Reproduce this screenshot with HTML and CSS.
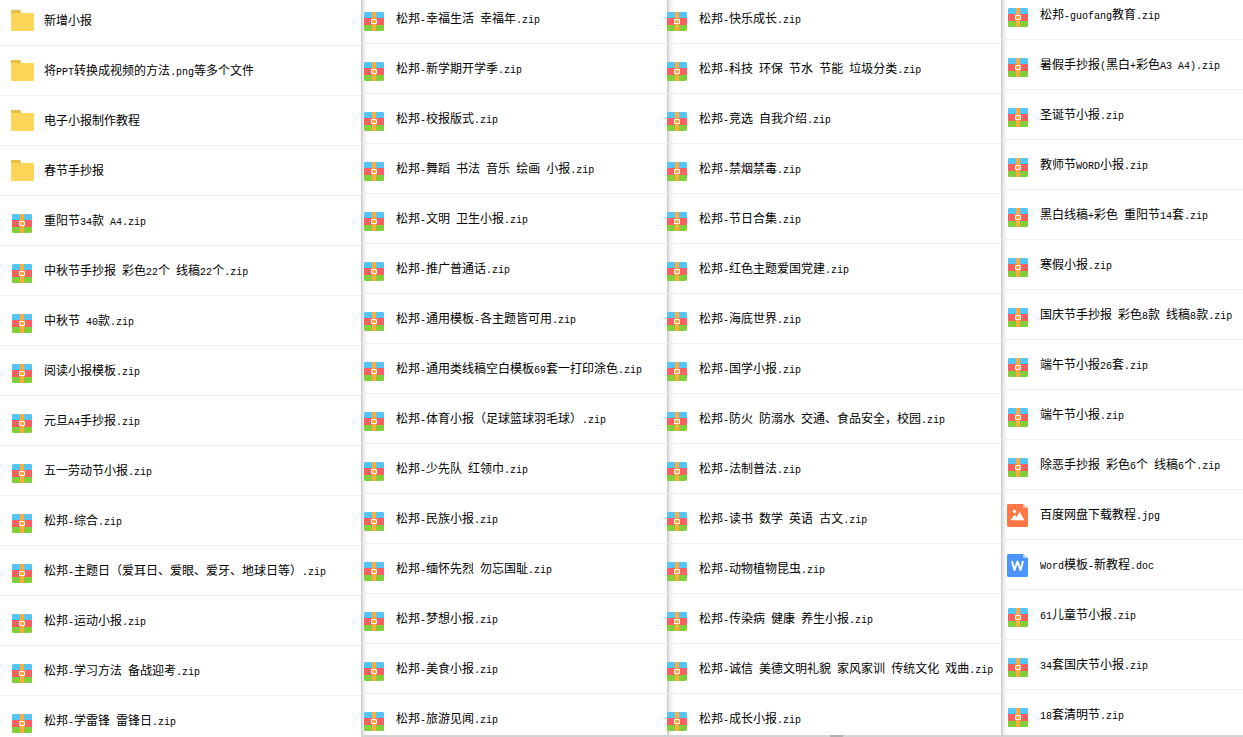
FILE: index.html
```html
<!DOCTYPE html>
<html lang="zh-CN">
<head>
<meta charset="utf-8">
<meta name="viewport" content="width=device-width, initial-scale=1">
<title>小报文件列表</title>
<link rel="stylesheet" href="styles.css">
</head>
<body>
<svg class="symbols" aria-hidden="true">
  <symbol id="folder" viewBox="0 0 24 24">
    <path d="M1 0h9l1 1v3H1z" fill="#edbd43"/>
    <path d="M10 0l1 1v1h-1z" fill="#f6dc9a"/>
    <path d="M1 3h23v18H1z" fill="#ffd659"/>
  </symbol>
  <symbol id="zip" viewBox="0 0 24 24">
    <path d="M3 4h18l1 1v5H2V5z" fill="#53c5f7"/>
    <path d="M2 10h20v7H2z" fill="#fb6060"/>
    <path d="M2 17h20v5l-1 1H3l-1-1z" fill="#80cf38"/>
    <path d="M10 4h4v19h-4z" fill="#ffac3d"/>
    <path d="M9.5 11.500h5v4h-5z" fill="#ffac3d" stroke="#fff"/>
  </symbol>
  <symbol id="image" viewBox="0 0 24 24">
    <path d="M2 0h15l5 4v18l-1 1H2l-1-1V1z" fill="#ff7744"/>
    <path d="M17 0l5 4h-4l-1-1z" fill="#ffc9b4"/>
    <circle cx="8.500" cy="7.500" r="1.700" fill="#fff"/>
    <path d="M5 16l3.500-5 2.500 2.500L13.500 8 18 16z" fill="#fff" stroke="#fff" stroke-width=".5" stroke-linejoin="round"/>
  </symbol>
  <symbol id="word" viewBox="0 0 24 24">
    <path d="M2 0h15l5 4v18l-1 1H2l-1-1V1z" fill="#4c94ff"/>
    <path d="M17 0l5 4h-4l-1-1z" fill="#b9d6ff"/>
    <path d="M6 7l2.500 9L11.500 7.500 14.500 16 17 7" fill="none" stroke="#fff" stroke-width="2" stroke-linejoin="round"/>
  </symbol>
</svg>
<main class="board">
  <ul class="files files-first">
    <li><svg><use href="#folder"/></svg><p>新增小报</p></li>
    <li><svg><use href="#folder"/></svg><p>将<span>PPT</span>转换成视频的方法<span>.png</span>等多个文件</p></li>
    <li><svg><use href="#folder"/></svg><p>电子小报制作教程</p></li>
    <li><svg><use href="#folder"/></svg><p>春节手抄报</p></li>
    <li><svg><use href="#zip"/></svg><p>重阳节<span>34</span>款<span> A4.zip</span></p></li>
    <li><svg><use href="#zip"/></svg><p>中秋节手抄报<span> </span>彩色<span>22</span>个<span> </span>线稿<span>22</span>个<span>.zip</span></p></li>
    <li><svg><use href="#zip"/></svg><p>中秋节<span> 40</span>款<span>.zip</span></p></li>
    <li><svg><use href="#zip"/></svg><p>阅读小报模板<span>.zip</span></p></li>
    <li><svg><use href="#zip"/></svg><p>元旦<span>A4</span>手抄报<span>.zip</span></p></li>
    <li><svg><use href="#zip"/></svg><p>五一劳动节小报<span>.zip</span></p></li>
    <li><svg><use href="#zip"/></svg><p>松邦<span>-</span>综合<span>.zip</span></p></li>
    <li><svg><use href="#zip"/></svg><p>松邦<span>-</span>主题日（爱耳日、爱眼、爱牙、地球日等）<span>.zip</span></p></li>
    <li><svg><use href="#zip"/></svg><p>松邦<span>-</span>运动小报<span>.zip</span></p></li>
    <li><svg><use href="#zip"/></svg><p>松邦<span>-</span>学习方法<span> </span>备战迎考<span>.zip</span></p></li>
    <li><svg><use href="#zip"/></svg><p>松邦<span>-</span>学雷锋<span> </span>雷锋日<span>.zip</span></p></li>
  </ul>
  <ul class="files files-second layered">
    <li><svg><use href="#zip"/></svg><p>松邦<span>-</span>幸福生活<span> </span>幸福年<span>.zip</span></p></li>
    <li><svg><use href="#zip"/></svg><p>松邦<span>-</span>新学期开学季<span>.zip</span></p></li>
    <li><svg><use href="#zip"/></svg><p>松邦<span>-</span>校报版式<span>.zip</span></p></li>
    <li><svg><use href="#zip"/></svg><p>松邦<span>-</span>舞蹈<span> </span>书法<span> </span>音乐<span> </span>绘画<span> </span>小报<span>.zip</span></p></li>
    <li><svg><use href="#zip"/></svg><p>松邦<span>-</span>文明<span> </span>卫生小报<span>.zip</span></p></li>
    <li><svg><use href="#zip"/></svg><p>松邦<span>-</span>推广普通话<span>.zip</span></p></li>
    <li><svg><use href="#zip"/></svg><p>松邦<span>-</span>通用模板<span>-</span>各主题皆可用<span>.zip</span></p></li>
    <li><svg><use href="#zip"/></svg><p>松邦<span>-</span>通用类线稿空白模板<span>69</span>套一打印涂色<span>.zip</span></p></li>
    <li><svg><use href="#zip"/></svg><p>松邦<span>-</span>体育小报（足球篮球羽毛球）<span>.zip</span></p></li>
    <li><svg><use href="#zip"/></svg><p>松邦<span>-</span>少先队<span> </span>红领巾<span>.zip</span></p></li>
    <li><svg><use href="#zip"/></svg><p>松邦<span>-</span>民族小报<span>.zip</span></p></li>
    <li><svg><use href="#zip"/></svg><p>松邦<span>-</span>缅怀先烈<span> </span>勿忘国耻<span>.zip</span></p></li>
    <li><svg><use href="#zip"/></svg><p>松邦<span>-</span>梦想小报<span>.zip</span></p></li>
    <li><svg><use href="#zip"/></svg><p>松邦<span>-</span>美食小报<span>.zip</span></p></li>
    <li><svg><use href="#zip"/></svg><p>松邦<span>-</span>旅游见闻<span>.zip</span></p></li>
  </ul>
  <ul class="files files-third layered">
    <li><svg><use href="#zip"/></svg><p>松邦<span>-</span>快乐成长<span>.zip</span></p></li>
    <li><svg><use href="#zip"/></svg><p>松邦<span>-</span>科技<span> </span>环保<span> </span>节水<span> </span>节能<span> </span>垃圾分类<span>.zip</span></p></li>
    <li><svg><use href="#zip"/></svg><p>松邦<span>-</span>竞选<span> </span>自我介绍<span>.zip</span></p></li>
    <li><svg><use href="#zip"/></svg><p>松邦<span>-</span>禁烟禁毒<span>.zip</span></p></li>
    <li><svg><use href="#zip"/></svg><p>松邦<span>-</span>节日合集<span>.zip</span></p></li>
    <li><svg><use href="#zip"/></svg><p>松邦<span>-</span>红色主题爱国党建<span>.zip</span></p></li>
    <li><svg><use href="#zip"/></svg><p>松邦<span>-</span>海底世界<span>.zip</span></p></li>
    <li><svg><use href="#zip"/></svg><p>松邦<span>-</span>国学小报<span>.zip</span></p></li>
    <li><svg><use href="#zip"/></svg><p>松邦<span>-</span>防火<span> </span>防溺水<span> </span>交通、食品安全，校园<span>.zip</span></p></li>
    <li><svg><use href="#zip"/></svg><p>松邦<span>-</span>法制普法<span>.zip</span></p></li>
    <li><svg><use href="#zip"/></svg><p>松邦<span>-</span>读书<span> </span>数学<span> </span>英语<span> </span>古文<span>.zip</span></p></li>
    <li><svg><use href="#zip"/></svg><p>松邦<span>-</span>动物植物昆虫<span>.zip</span></p></li>
    <li><svg><use href="#zip"/></svg><p>松邦<span>-</span>传染病<span> </span>健康<span> </span>养生小报<span>.zip</span></p></li>
    <li><svg><use href="#zip"/></svg><p>松邦<span>-</span>诚信<span> </span>美德文明礼貌<span> </span>家风家训<span> </span>传统文化<span> </span>戏曲<span>.zip</span></p></li>
    <li><svg><use href="#zip"/></svg><p>松邦<span>-</span>成长小报<span>.zip</span></p></li>
  </ul>
  <ul class="files files-fourth layered">
    <li><svg><use href="#zip"/></svg><p>松邦<span>-guofang</span>教育<span>.zip</span></p></li>
    <li><svg><use href="#zip"/></svg><p>暑假手抄报<span>(</span>黑白<span>+</span>彩色<span>A3 A4).zip</span></p></li>
    <li><svg><use href="#zip"/></svg><p>圣诞节小报<span>.zip</span></p></li>
    <li><svg><use href="#zip"/></svg><p>教师节<span>WORD</span>小报<span>.zip</span></p></li>
    <li><svg><use href="#zip"/></svg><p>黑白线稿<span>+</span>彩色<span> </span>重阳节<span>14</span>套<span>.zip</span></p></li>
    <li><svg><use href="#zip"/></svg><p>寒假小报<span>.zip</span></p></li>
    <li><svg><use href="#zip"/></svg><p>国庆节手抄报<span> </span>彩色<span>8</span>款<span> </span>线稿<span>8</span>款<span>.zip</span></p></li>
    <li><svg><use href="#zip"/></svg><p>端午节小报<span>26</span>套<span>.zip</span></p></li>
    <li><svg><use href="#zip"/></svg><p>端午节小报<span>.zip</span></p></li>
    <li><svg><use href="#zip"/></svg><p>除恶手抄报<span> </span>彩色<span>6</span>个<span> </span>线稿<span>6</span>个<span>.zip</span></p></li>
    <li><svg><use href="#image"/></svg><p>百度网盘下载教程<span>.jpg</span></p></li>
    <li><svg><use href="#word"/></svg><p><span>Word</span>模板<span>-</span>新教程<span>.doc</span></p></li>
    <li><svg><use href="#zip"/></svg><p><span>61</span>儿童节小报<span>.zip</span></p></li>
    <li><svg><use href="#zip"/></svg><p><span>34</span>套国庆节小报<span>.zip</span></p></li>
    <li><svg><use href="#zip"/></svg><p><span>18</span>套清明节<span>.zip</span></p></li>
  </ul>
</main>
</body>
</html>
```

FILE: styles.css
```css
* {
  box-sizing: border-box;
}

body {
  margin: 0;
  background: #fff;
  color: #000;
  font-family: "Noto Sans CJK SC", sans-serif;
  font-size: 12px;
  line-height: 20px;
}

.symbols {
  position: absolute;
  width: 0;
  height: 0;
}

.board {
  display: grid;
  grid-template-columns: 361fr 306fr 334fr 242fr;
  overflow: hidden;
  background: linear-gradient(90deg, #d4d4d4 830px, #b0b0b0 830px, #b0b0b0 843px, #d4d4d4 843px);
}

.files {
  min-width: 0;
  margin: 0;
  padding: 0;
  background: #fff;
  list-style: none;
}

.files li {
  display: flex;
  gap: 10px;
  height: 50px;
  padding-top: 14px;
  border-bottom: 1px solid #f0f0f0;
}

.files li:last-child {
  height: 41px;
  border-bottom: 0;
}

.files svg {
  flex: none;
  width: 24px;
  height: 24px;
}

.files p {
  margin: 0;
  white-space: pre;
}

.files span {
  font-family: "Liberation Mono", monospace;
  font-size: 10px;
}

.layered {
  margin-bottom: 2px;
  background: linear-gradient(90deg, #c4c4c4, #e6e6e6 2px, #f8f8f8 5px, #fff 8px);
}

.files-first li:first-child {
  margin-top: -4px;
}

.files-second li:first-child,
.files-third li:first-child {
  margin-top: -6px;
}

.files-fourth li:first-child {
  margin-top: -10px;
}

.files-first svg {
  margin-left: 10px;
}

.files-second svg {
  margin-left: 1px;
}

.files-third svg {
  margin-left: -2px;
}

.files-fourth svg {
  margin-left: 5px;
}
```
